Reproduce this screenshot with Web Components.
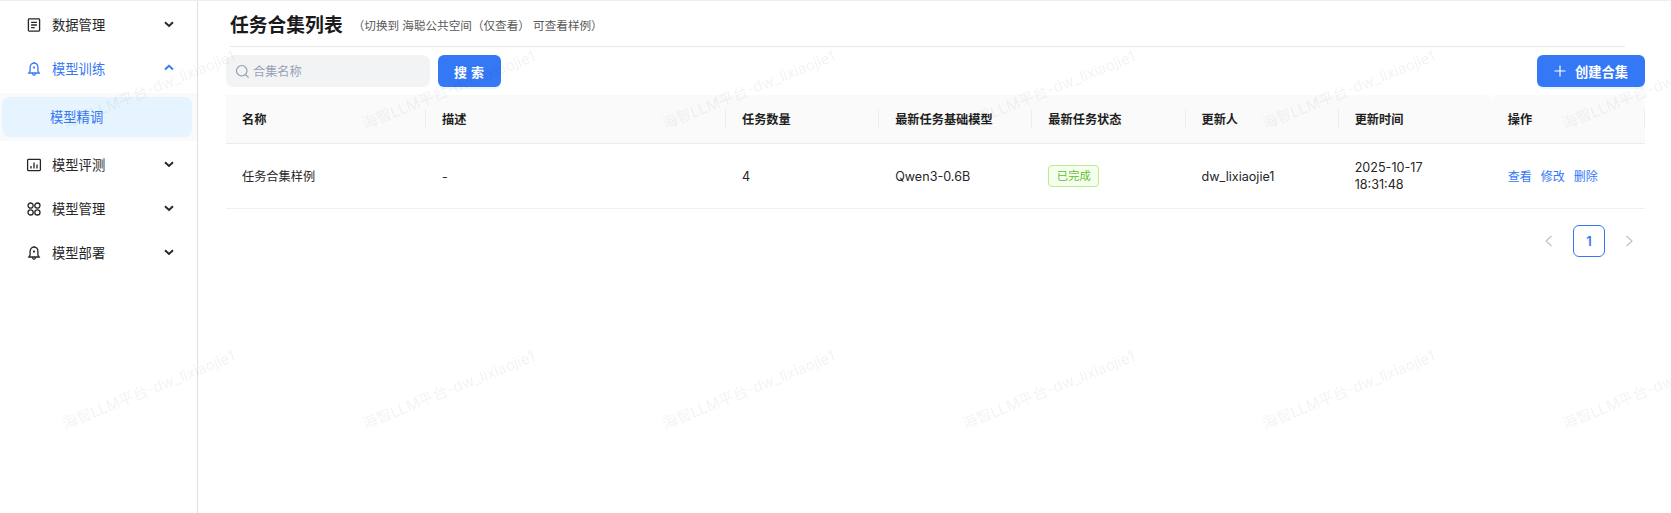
<!DOCTYPE html>
<html lang="zh">
<head>
<meta charset="utf-8">
<title>任务合集列表</title>
<style>
  html, body { margin: 0; height: 100%; }
  body {
    font-family: Inter, "Noto Sans CJK SC", sans-serif;
    font-size: 12.2px;
    color: #1f1f1f;
    background: #fff;
    overflow: hidden;
  }
</style>
</head>
<body>
<app-shell>
  <side-nav slot="nav">
    <nav-item label="数据管理" icon="doc" arrow="down"></nav-item>
    <nav-item label="模型训练" icon="bell" arrow="up" active></nav-item>
    <nav-sub label="模型精调"></nav-sub>
    <nav-item label="模型评测" icon="chart" arrow="down"></nav-item>
    <nav-item label="模型管理" icon="apps" arrow="down"></nav-item>
    <nav-item label="模型部署" icon="bell" arrow="down"></nav-item>
  </side-nav>
  <page-title note="（切换到 海聪公共空间（仅查看） 可查看样例）">任务合集列表</page-title>
  <tool-bar></tool-bar>
  <task-table></task-table>
  <page-nav></page-nav>
</app-shell>
<water-mark text="海智LLM平台-dw_lixiaojie1"></water-mark>

<script>
const ICONS = {
  doc: '<rect x="2.4" y="1.9" width="11.2" height="12.2" rx=".8"/><path d="M5.1 5.4h5.8M5.1 8h5.8M5.1 10.6h3.6"/>',
  bell: '<path d="M8 2.2C5.6 2.2 4.1 4 4.1 6.4V10L2.8 12h10.4l-1.3-2V6.4C11.9 4 10.4 2.2 8 2.2z"/><path d="M6.4 12.2c.2 1.3.8 2.2 1.6 2.2s1.4-.9 1.6-2.2M8 .9v1.3"/><circle cx="8" cy="6.6" r=".5"/>',
  chart: '<rect x="1.6" y="2.4" width="12.8" height="11.2" rx=".8"/><path d="M5 11.4V9M8 11.4V5.4M11 11.4V7.6"/>',
  apps: '<circle cx="4.6" cy="4.6" r="2.6"/><circle cx="11.4" cy="4.6" r="2.6"/><circle cx="4.6" cy="11.4" r="2.6"/><circle cx="11.4" cy="11.4" r="2.6"/>',
  search: '<circle cx="7.2" cy="7.2" r="5.6"/><path d="M11.3 11.3l3.2 3.2"/>'
}

// one menu row with icon, label and a chevron
class NavItem extends HTMLElement {
  constructor () {
    super()
    this.attachShadow({ mode: 'open' })
  }

  connectedCallback () {
    const arrow = this.getAttribute('arrow') === 'up' ? 'M3 8.5L7 4.8l4 3.7' : 'M3 5.2L7 9l4-3.8'
    this.shadowRoot.innerHTML = `
      <style>
        :host { display: flex; align-items: center; height: 44px; padding-left: 26px; color: #262626; font-size: 13.3px; }
        :host([active]) { color: #3478f6; }
        svg.icon { width: 16px; height: 16px; fill: none; stroke: currentColor; stroke-width: 1.3; }
        span { margin: -2px 0 0 10px; flex: 1; }
        svg.arrow { width: 14px; height: 14px; fill: none; stroke: currentColor; stroke-width: 1.9; margin: -3px 21px 0 0; }
      </style>
      <svg class="icon" viewBox="0 0 16 16">${ICONS[this.getAttribute('icon')]}</svg>
      <span>${this.getAttribute('label')}</span>
      <svg class="arrow" viewBox="0 0 14 14"><path d="${arrow}"/></svg>
    `
  }
}

class NavSub extends HTMLElement {
  constructor () {
    super()
    this.attachShadow({ mode: 'open' })
  }

  connectedCallback () {
    this.shadowRoot.innerHTML = `
      <style>
        :host { display: block; margin: 2px 0; padding: 4px 5px 4px 2px; background: #fafafa; }
        div { height: 40px; line-height: 40px; padding-left: 48px; border-radius: 8px; background: #e6f4ff; color: #3478f6; font-size: 13.3px; }
      </style>
      <div>${this.getAttribute('label')}</div>
    `
  }
}

class SideNav extends HTMLElement {
  constructor () {
    super()
    this.attachShadow({ mode: 'open' }).innerHTML = `
      <style>
        :host { display: block; flex: none; width: 197px; padding-top: 2px; border-right: 1px solid #e0e0e3; }
      </style>
      <slot></slot>
    `
  }
}

class AppShell extends HTMLElement {
  constructor () {
    super()
    this.attachShadow({ mode: 'open' }).innerHTML = `
      <style>
        :host { display: flex; height: 513px; border-top: 1px solid #eeeef1; box-sizing: border-box; }
        main { flex: 1; min-width: 0; padding: 0 26px 0 28px; }
      </style>
      <slot name="nav"></slot>
      <main><slot></slot></main>
    `
  }
}

class PageTitle extends HTMLElement {
  constructor () {
    super()
    this.attachShadow({ mode: 'open' })
  }

  connectedCallback () {
    this.shadowRoot.innerHTML = `
      <style>
        :host { display: flex; align-items: center; height: 41px; padding-top: 4px; margin: 0 20px 0 4px; border-bottom: 1px solid #e8e8e8; }
        h1 { margin: 0; font-size: 18.8px; font-weight: 700; line-height: 26px; color: #1a1a1a; }
        small { margin: 0 0 2px 10px; font-size: 11.6px; color: #595959; }
      </style>
      <h1><slot></slot></h1>
      <small>${this.getAttribute('note')}</small>
    `
  }
}

class BlueButton extends HTMLElement {
  constructor () {
    super()
    this.attachShadow({ mode: 'open' }).innerHTML = `
      <style>
        :host { display: inline-flex; align-items: center; justify-content: center; height: 32px; border-radius: 6px; background: #3478f6; color: #fff; font-size: 13.3px; font-weight: 600; box-shadow: 0 2px 0 rgba(5,145,255,.08); }
      </style>
      <slot></slot>
    `
  }
}

class ToolBar extends HTMLElement {
  constructor () {
    super()
    this.attachShadow({ mode: 'open' }).innerHTML = `
      <style>
        :host { display: flex; align-items: center; gap: 8px; margin-top: 8px; height: 32px; }
        .search { display: flex; align-items: center; width: 204px; height: 32px; padding-left: 9px; box-sizing: border-box; border-radius: 8px; background: #f1f3f5; color: #98a2b3; font-size: 12.2px; }
        .search svg { width: 15px; height: 15px; margin-right: 3px; fill: none; stroke: #8e99a8; stroke-width: 1.2; }
        .go { width: 60px; padding-left: 3px; font-size: 13px; letter-spacing: 4px; }
        .add { width: 108px; margin-left: auto; }
        .add svg { width: 12px; height: 12px; margin-right: 9px; fill: none; stroke: #fff; stroke-width: 1.2; }
      </style>
      <div class="search"><svg viewBox="0 0 16 16">${ICONS.search}</svg>合集名称</div>
      <blue-button class="go">搜索</blue-button>
      <blue-button class="add"><svg viewBox="0 0 12 12"><path d="M6 .5v11M.5 6h11"/></svg>创建合集</blue-button>
    `
  }
}

class StatusTag extends HTMLElement {
  constructor () {
    super()
    this.attachShadow({ mode: 'open' }).innerHTML = `
      <style>
        :host { display: inline-block; height: 20px; line-height: 20px; padding: 0 7.5px; border: 1px solid #b7eb8f; border-radius: 4px; background: #f6ffed; color: #62bf33; font-size: 11.3px; }
      </style>
      <slot></slot>
    `
  }
}

const COLUMNS = ['名称', '描述', '任务数量', '最新任务基础模型', '最新任务状态', '更新人', '更新时间', '操作']

class TaskTable extends HTMLElement {
  constructor () {
    super()
    const heads = COLUMNS.map(c => `<div class="th">${c}</div>`).join('')
    this.attachShadow({ mode: 'open' }).innerHTML = `
      <style>
        :host { display: grid; grid-template-columns: 200px 300px repeat(6, 1fr); margin-top: 8px; }
        .th { position: relative; height: 48px; line-height: 49px; padding-left: 16px; background: #fafafa; border-bottom: 1px solid #ececec; font-weight: 600; color: #1f1f1f; }
        .th:first-child { border-top-left-radius: 8px; }
        .th:nth-child(8) { border-top-right-radius: 8px; }
        .th:not(:nth-child(8))::after { content: ""; position: absolute; right: 0; top: 14px; height: 20px; width: 1px; background: #eeeeee; }
        .td { display: flex; align-items: center; height: 64px; padding-left: 16px; border-bottom: 1px solid #f0f0f0; line-height: 17px; color: #262626; }
        .latin { font-size: 12.6px; }
        a { color: #3478f6; margin-right: 9px; font-size: 12px; }
      </style>
      ${heads}
      <div class="td">任务合集样例</div>
      <div class="td">-</div>
      <div class="td latin">4</div>
      <div class="td latin">Qwen3-0.6B</div>
      <div class="td"><status-tag>已完成</status-tag></div>
      <div class="td latin">dw_lixiaojie1</div>
      <div class="td latin">2025-10-17<br>18:31:48</div>
      <div class="td"><a>查看</a><a>修改</a><a>删除</a></div>
    `
  }
}

class PageNav extends HTMLElement {
  constructor () {
    super()
    this.attachShadow({ mode: 'open' }).innerHTML = `
      <style>
        :host { display: flex; justify-content: flex-end; align-items: center; height: 32px; margin-top: 16px; }
        svg { width: 12px; height: 12px; fill: none; stroke: #bfbfbf; stroke-width: 1.1; }
        .cur { width: 30px; height: 30px; line-height: 30px; margin: 0 18px; text-align: center; border: 1px solid #3478f6; border-radius: 6px; color: #3478f6; font-size: 13px; font-weight: 600; }
        .next { margin-right: 10px; }
      </style>
      <svg viewBox="0 0 12 12"><path d="M8.5 1L3 6l5.5 5"/></svg>
      <div class="cur">1</div>
      <svg class="next" viewBox="0 0 12 12"><path d="M3.5 1L9 6l-5.5 5"/></svg>
    `
  }
}

// fixed overlay, the text repeats every 300px both ways
class WaterMark extends HTMLElement {
  constructor () {
    super()
    this.attachShadow({ mode: 'open' })
  }

  connectedCallback () {
    const text = this.getAttribute('text')
    let marks = ''
    for (let y = 0; y < 2; y++) {
      for (let x = 0; x < 6; x++) {
        marks += `<span style="left:${67 + x * 300}px;top:${114 + y * 300}px">${text}</span>`
      }
    }
    this.shadowRoot.innerHTML = `
      <style>
        :host { position: fixed; inset: 0; overflow: hidden; pointer-events: none; }
        span { position: absolute; white-space: nowrap; font-size: 15px; line-height: 20px; color: rgba(0,0,0,.05); transform: rotate(-22deg); transform-origin: 0 100%; }
      </style>
      ${marks}
    `
  }
}

customElements.define('nav-item', NavItem)
customElements.define('nav-sub', NavSub)
customElements.define('side-nav', SideNav)
customElements.define('app-shell', AppShell)
customElements.define('page-title', PageTitle)
customElements.define('blue-button', BlueButton)
customElements.define('tool-bar', ToolBar)
customElements.define('status-tag', StatusTag)
customElements.define('task-table', TaskTable)
customElements.define('page-nav', PageNav)
customElements.define('water-mark', WaterMark)
</script>
</body>
</html>
